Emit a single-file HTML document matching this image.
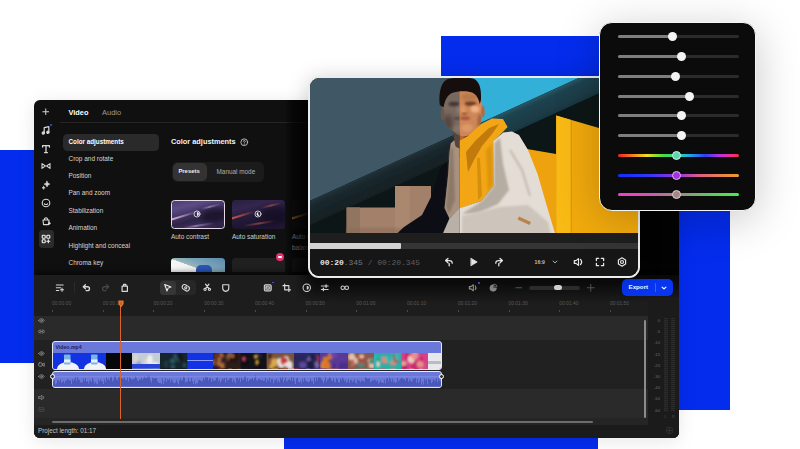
<!DOCTYPE html>
<html lang="en"><head><meta charset="utf-8"><title>Video editor – color adjustments</title>
<style>
*{box-sizing:border-box;margin:0;padding:0}
html,body{width:800px;height:449px;overflow:hidden;background:#fff}
body{font-family:"Liberation Sans",sans-serif;color:#ddd;position:relative}
.abs,.ic,.t{position:absolute}
.t{white-space:nowrap;line-height:1}
.ic{overflow:visible}
.blue{position:absolute;background:#042ced}
#app{position:absolute;left:34px;top:100px;width:645px;height:338px;background:#101010;border-radius:6px;box-shadow:0 3px 18px rgba(0,0,0,.10);overflow:hidden}
#preview{position:absolute;left:308px;top:76px;width:332px;height:202px;border:2px solid #ececec;border-radius:11px;background:#161616;box-shadow:0 3px 22px rgba(0,0,0,.2);overflow:hidden}
#panel{position:absolute;left:599px;top:21.5px;width:157px;height:189px;border:1.5px solid #f4f4f4;border-radius:13px;background:#0b0b0b;box-shadow:0 8px 44px rgba(0,0,0,.22)}
.trk{position:absolute;left:18px;width:121px;height:3px;border-radius:2px;background:#2b2b2b}
.trk i{position:absolute;left:0;top:0;height:3px;border-radius:2px;background:#7e7e7e}
.trk b{position:absolute;top:-3px;width:9px;height:9px;border-radius:4.5px;background:#f4f4f4;margin-left:-4.5px}
.menu{position:absolute;left:34.5px;font-size:6.45px;color:#d6d6d6;white-space:nowrap;line-height:1}
.rl{position:absolute;top:28.5px;font-size:5.4px;color:#5c5c5c;white-space:nowrap;line-height:1;letter-spacing:.1px}
.tick{position:absolute;top:35.5px;width:1px;height:2px;background:#555}
</style></head><body>

<div class="blue" style="left:0;top:150px;width:40px;height:213px"></div>
<div class="blue" style="left:441px;top:36px;width:288.5px;height:374px"></div>
<div class="blue" style="left:284px;top:400px;width:314px;height:49px"></div>
<div id="app">
<div class="abs" style="left:26px;top:22px;width:300px;height:1px;background:#262626"></div>
<div class="t" style="left:34.5px;top:8.599999999999994px;font-size:7.4px;font-weight:bold;color:#fff">Video</div>
<div class="t" style="left:68px;top:8.599999999999994px;font-size:7.5px;color:#9a9a9a">Audio</div>
<svg class="ic" style="left:8.25px;top:8.25px;width:7.5px;height:7.5px" viewBox="0 0 10 10" fill="none" stroke="#d8d8d8" stroke-width="1.3" stroke-linecap="round" stroke-linejoin="round" ><path d="M5 1.2v7.6M1.2 5h7.6"/></svg>
<svg class="ic" style="left:7px;top:25px;width:10px;height:10px" viewBox="0 0 10 10" fill="none" stroke="#d8d8d8" stroke-width="1.2" stroke-linecap="round" stroke-linejoin="round" ><path d="M3.2 8V2.6l4.6-1v5.6"/><circle cx="2.3" cy="8" r="1.1" fill="#d8d8d8"/><circle cx="6.9" cy="7.2" r="1.1" fill="#d8d8d8"/></svg>
<div class="abs" style="left:16px;top:24px;width:2px;height:2px;border-radius:1px;background:#3355ff"></div>
<svg class="ic" style="left:7px;top:43.5px;width:10px;height:10px" viewBox="0 0 10 10" fill="none" stroke="#d8d8d8" stroke-width="1.3" stroke-linecap="round" stroke-linejoin="round" ><path d="M1.6 3V1.6h6.8V3M5 1.6v7M3.6 8.6h2.8"/></svg>
<svg class="ic" style="left:7px;top:61px;width:10px;height:10px" viewBox="0 0 10 10" fill="none" stroke="#d8d8d8" stroke-width="1.1" stroke-linecap="round" stroke-linejoin="round" ><path d="M1 2.6l3.4 2.4L1 7.4zM9 2.6L5.6 5 9 7.4z"/></svg>
<svg class="ic" style="left:7px;top:79.5px;width:10px;height:10px" viewBox="0 0 10 10" fill="none" stroke="#d8d8d8" stroke-width="0.6" stroke-linecap="round" stroke-linejoin="round" ><path d="M6 1.2l.9 2 2 .9-2 .9-.9 2-.9-2-2-.9 2-.9z" fill="#d8d8d8"/><path d="M2.6 6.2l.5 1.1 1.1.5-1.1.5-.5 1.1-.5-1.1L1 7.8l1.1-.5z" fill="#d8d8d8" stroke-width=".5"/></svg>
<svg class="ic" style="left:7px;top:97.5px;width:10px;height:10px" viewBox="0 0 10 10" fill="none" stroke="#d8d8d8" stroke-width="1.1" stroke-linecap="round" stroke-linejoin="round" ><circle cx="5" cy="5" r="3.8"/><path d="M3.4 5.8c.8 1 2.4 1 3.2 0"/></svg>
<svg class="ic" style="left:7px;top:116px;width:10px;height:10px" viewBox="0 0 10 10" fill="none" stroke="#d8d8d8" stroke-width="1.1" stroke-linecap="round" stroke-linejoin="round" ><path d="M2 4h6l-.5 4.6h-5zM3.4 4c0-3 3.2-3 3.2 0M7.4 7.2h2M8.4 6.2v2"/></svg>
<div class="abs" style="left:4.5px;top:130px;width:15.5px;height:18px;border-radius:3.5px;background:#2b2b2b"></div>
<svg class="ic" style="left:7px;top:134px;width:10px;height:10px" viewBox="0 0 10 10" fill="none" stroke="#f0f0f0" stroke-width="1.1" stroke-linecap="round" stroke-linejoin="round" ><rect x="1.2" y="1.2" width="3" height="3" rx=".8"/><rect x="5.8" y="1.2" width="3" height="3" rx=".8"/><rect x="1.2" y="5.8" width="3" height="3" rx=".8"/><path d="M7.3 5.8v3M5.8 7.3h3"/></svg>
<div class="abs" style="left:28.5px;top:33.5px;width:96.5px;height:17.5px;border-radius:4.5px;background:#2a2a2a"></div>
<div class="menu" style="top:39.3px;font-weight:bold;color:#fff;font-size:6.3px;">Color adjustments</div>
<div class="menu" style="top:56.3px;">Crop and rotate</div>
<div class="menu" style="top:73.3px;">Position</div>
<div class="menu" style="top:90.3px;">Pan and zoom</div>
<div class="menu" style="top:107.8px;">Stabilization</div>
<div class="menu" style="top:125.3px;">Animation</div>
<div class="menu" style="top:142.8px;">Highlight and conceal</div>
<div class="menu" style="top:160.3px;">Chroma key</div>
<div class="t" style="left:137px;top:38.400000000000006px;font-size:7.36px;font-weight:bold;color:#f4f4f4">Color adjustments</div>
<svg class="ic" style="left:206.35px;top:37.95px;width:8.5px;height:8.5px" viewBox="0 0 10 10" fill="none" stroke="#cfcfcf" stroke-width="1" stroke-linecap="round" stroke-linejoin="round" ><circle cx="5" cy="5" r="4"/><path d="M3.8 4c0-1.6 2.4-1.6 2.4 0 0 .9-1.2 1-1.2 2M5 7.4v.1"/></svg>
<div class="abs" style="left:138px;top:61.5px;width:92px;height:20px;border-radius:5px;background:#1b1b1b"></div>
<div class="abs" style="left:139px;top:62.5px;width:33.5px;height:18px;border-radius:5px;background:#333"></div>
<div class="t" style="left:144.4px;top:69.19999999999999px;font-size:5.9px;font-weight:bold;color:#f0f0f0">Presets</div>
<div class="t" style="left:182.5px;top:68.80000000000001px;font-size:6.4px;color:#b0b0b0">Manual mode</div>
<div class="abs" style="left:137px;top:99.5px;width:53.5px;height:29.5px;border-radius:3.5px;border:1.4px solid #e6d8e6;background:linear-gradient(166deg,#4c3e6e 0%,#5c4c84 22%,#46386a 40%,#2e2446 62%,#3e3260 82%,#2a2040 100%);overflow:hidden"><div class="abs" style="left:29.4px;top:7.4px;width:26.8px;height:16.2px;border-radius:50%;background:rgba(22,16,36,.75);filter:blur(3px)"></div><div class="abs" style="left:-2px;top:18.3px;width:26.8px;height:2.2px;background:linear-gradient(90deg,rgba(240,190,200,.95),rgba(200,160,200,.7) 50%,rgba(120,100,160,0));transform:rotate(-17deg);transform-origin:0 50%;filter:blur(.5px)"></div><div class="abs" style="left:10.7px;top:26px;width:32.1px;height:1.8px;background:linear-gradient(90deg,rgba(160,130,190,0),rgba(190,160,210,.6) 40%,rgba(150,120,180,0));transform:rotate(-9deg);transform-origin:0 50%;filter:blur(.5px)"></div><div class="abs" style="left:29.4px;top:7.1px;width:21.4px;height:1.6px;background:linear-gradient(90deg,rgba(160,130,190,0),rgba(190,160,210,.6) 40%,rgba(150,120,180,0));transform:rotate(-14deg);transform-origin:0 50%;filter:blur(.5px)"></div></div>
<div class="abs" style="left:198px;top:100px;width:52.5px;height:28.5px;border-radius:3.5px;background:linear-gradient(166deg,#2a1e42 0%,#34264e 25%,#241a3a 50%,#1c142e 75%,#221836 100%);overflow:hidden"><div class="abs" style="left:28.9px;top:7.1px;width:26.2px;height:15.7px;border-radius:50%;background:rgba(16,10,28,.6);filter:blur(3px)"></div><div class="abs" style="left:-2px;top:17.7px;width:26.2px;height:2.2px;background:linear-gradient(90deg,rgba(220,90,60,.95),rgba(190,80,70,.7) 50%,rgba(90,50,90,0));transform:rotate(-17deg);transform-origin:0 50%;filter:blur(.5px)"></div><div class="abs" style="left:10.5px;top:25.1px;width:31.5px;height:1.8px;background:linear-gradient(90deg,rgba(120,60,90,0),rgba(190,90,80,.6) 50%,rgba(120,60,90,0));transform:rotate(-9deg);transform-origin:0 50%;filter:blur(.5px)"></div><div class="abs" style="left:28.9px;top:6.8px;width:21px;height:1.6px;background:linear-gradient(90deg,rgba(120,60,90,0),rgba(190,90,80,.6) 50%,rgba(120,60,90,0));transform:rotate(-14deg);transform-origin:0 50%;filter:blur(.5px)"></div></div>
<div class="abs" style="left:258px;top:100px;width:52px;height:28.5px;border-radius:3.5px;background:#16141a;overflow:hidden"><div class="abs" style="left:-2px;top:18px;width:26px;height:2.2px;background:linear-gradient(90deg,rgba(230,150,40,.95),rgba(200,120,40,.6) 60%,rgba(90,50,40,0));transform:rotate(-17deg);transform-origin:0 50%;filter:blur(.5px)"></div></div>
<svg class="ic" style="left:159.3px;top:110px;width:8px;height:8px" viewBox="0 0 10 10" fill="none" stroke="#eee" stroke-width="1" stroke-linecap="round" stroke-linejoin="round" ><circle cx="5" cy="5" r="3.8"/><path d="M5 2.6a2.4 2.4 0 0 1 0 4.8z" fill="#eee" stroke="none"/></svg>
<svg class="ic" style="left:220px;top:110px;width:8px;height:8px" viewBox="0 0 10 10" fill="none" stroke="#eee" stroke-width="1" stroke-linecap="round" stroke-linejoin="round" ><circle cx="5" cy="5" r="3.8"/><path d="M5.8 3a2.2 2.2 0 1 0 1.4 3.4A2 2 0 0 1 5.8 3z" fill="#eee" stroke="none"/></svg>
<div class="t" style="left:137px;top:134px;font-size:6.45px;color:#d0d0d0">Auto contrast</div>
<div class="t" style="left:198px;top:134px;font-size:6.45px;color:#d0d0d0">Auto saturation</div>
<div class="t" style="left:258px;top:134px;font-size:6.45px;color:#d0d0d0">Auto white</div>
<div class="t" style="left:258px;top:144.6px;font-size:6.45px;color:#d0d0d0">balance</div>
<div class="abs" style="left:137px;top:158px;width:53.5px;height:13.5px;border-radius:3.5px 3.5px 0 0;background:linear-gradient(200deg,#5a8ab0 0%,#7aa4b8 40%,#9ab8b8 60%,#f2f2f2 61%,#fff 100%)"></div>
<div class="abs" style="left:162px;top:165px;width:16px;height:6.5px;border-radius:5px 5px 0 0;background:#2a55b8"></div>
<div class="abs" style="left:198px;top:158px;width:52.5px;height:13.5px;border-radius:3.5px 3.5px 0 0;background:#202020"></div>
<div class="abs" style="left:258px;top:158px;width:52px;height:13.5px;border-radius:3.5px 3.5px 0 0;background:#202020"></div>
<div class="abs" style="left:242px;top:153px;width:8px;height:8px;border-radius:4px;background:#e72f6c"></div>
<div class="abs" style="left:244.3px;top:155.6px;width:3.4px;height:2.8px;border-radius:.8px;background:#fff"></div>
<div class="abs" id="tl" style="left:0;top:174.5px;width:645px;height:163.5px;background:#1d1d1d;box-shadow:0 -3px 6px rgba(0,0,0,.5)">
<div class="abs" style="left:262px;top:0;width:383px;height:27px;background:linear-gradient(180deg,rgba(0,0,0,.7),rgba(0,0,0,.45) 45%,rgba(0,0,0,0));-webkit-mask-image:linear-gradient(90deg,transparent,#000 20px);mask-image:linear-gradient(90deg,transparent,#000 20px)"></div>
<svg class="ic" style="left:21.25px;top:8.25px;width:9.5px;height:9.5px" viewBox="0 0 10 10" fill="none" stroke="#d8d8d8" stroke-width="1.1" stroke-linecap="round" stroke-linejoin="round" ><path d="M1.4 2h7.2M1.4 5h4.4M1.4 8h2.6M7.4 5.4v3.4M5.7 7.1h3.4"/></svg>
<div class="abs" style="left:39.5px;top:7.5px;width:1px;height:11px;background:#2b2b2b"></div>
<svg class="ic" style="left:48px;top:8.5px;width:9px;height:9px" viewBox="0 0 10 10" fill="none" stroke="#d8d8d8" stroke-width="1.5" stroke-linecap="round" stroke-linejoin="round" ><path d="M3.8 2L1.4 4.2l2.4 2.2M1.6 4.2h4.6a2.1 2.1 0 0 1 0 4.2H4.6"/></svg>
<svg class="ic" style="left:67px;top:8.5px;width:9px;height:9px" viewBox="0 0 10 10" fill="none" stroke="#454545" stroke-width="1.5" stroke-linecap="round" stroke-linejoin="round" ><path d="M6.2 2l2.4 2.2-2.4 2.2M8.4 4.2H3.8a2.1 2.1 0 0 0 0 4.2h1.6"/></svg>
<svg class="ic" style="left:86.25px;top:8.05px;width:9.5px;height:9.5px" viewBox="0 0 10 10" fill="none" stroke="#d8d8d8" stroke-width="1.2" stroke-linecap="round" stroke-linejoin="round" ><path d="M2.2 3.4h5.6v5.4H2.2zM3.8 3.2V1.4h2.4v1.8" stroke-width="1.3"/></svg>
<div class="abs" style="left:125.5px;top:5.5px;width:36px;height:15px;border-radius:4px;background:#272727"></div>
<div class="abs" style="left:126px;top:6px;width:15.5px;height:14px;border-radius:3.5px;background:#363636"></div>
<svg class="ic" style="left:129.25px;top:8.25px;width:9.5px;height:9.5px" viewBox="0 0 10 10" fill="none" stroke="#f0f0f0" stroke-width="1.1" stroke-linecap="round" stroke-linejoin="round" ><path d="M1.8 1.6l6.6 2.6-3 1.2-1.2 3z"/></svg>
<svg class="ic" style="left:147.25px;top:8.25px;width:9.5px;height:9.5px" viewBox="0 0 10 10" fill="none" stroke="#d8d8d8" stroke-width="1.2" stroke-linecap="round" stroke-linejoin="round" ><g transform="rotate(32 5 5)"><rect x="1" y="2.4" width="8" height="5.2" rx="2.6"/><circle cx="5" cy="5" r="1.1"/></g></svg>
<svg class="ic" style="left:168.75px;top:8.75px;width:8.5px;height:8.5px" viewBox="0 0 10 10" fill="none" stroke="#d8d8d8" stroke-width="1.3" stroke-linecap="round" stroke-linejoin="round" ><circle cx="2.4" cy="7.4" r="1.3"/><circle cx="7.6" cy="7.4" r="1.3"/><path d="M3.2 6.4L7 1.4M6.8 6.4L3 1.4" stroke-width="1.5"/></svg>
<svg class="ic" style="left:187.25px;top:8.25px;width:9.5px;height:9.5px" viewBox="0 0 10 10" fill="none" stroke="#d8d8d8" stroke-width="1.2" stroke-linecap="round" stroke-linejoin="round" ><path d="M1.8 1.8h6.4v3.6c0 1.8-1.6 3-3.2 3.4-1.6-.4-3.2-1.6-3.2-3.4z"/></svg>
<svg class="ic" style="left:229.25px;top:8.25px;width:9.5px;height:9.5px" viewBox="0 0 10 10" fill="none" stroke="#d8d8d8" stroke-width="1.1" stroke-linecap="round" stroke-linejoin="round" ><rect x="1.4" y="1.8" width="7.2" height="6.6" rx="1.2" fill="#6c6c6c"/><rect x="3.2" y="4" width="3.6" height="2.4" rx=".4" stroke-width=".8"/></svg>
<div class="abs" style="left:238px;top:7px;width:1.8px;height:1.8px;border-radius:1px;background:#5a52e0"></div>
<svg class="ic" style="left:247.95px;top:8.25px;width:9.5px;height:9.5px" viewBox="0 0 10 10" fill="none" stroke="#d8d8d8" stroke-width="1.2" stroke-linecap="round" stroke-linejoin="round" ><path d="M2.8 1v6.2H9M1 2.8h6.2V9"/></svg>
<svg class="ic" style="left:268.05px;top:8.25px;width:9.5px;height:9.5px" viewBox="0 0 10 10" fill="none" stroke="#d8d8d8" stroke-width="1.1" stroke-linecap="round" stroke-linejoin="round" ><circle cx="5" cy="5" r="3.9"/><path d="M5 2.8a2.2 2.2 0 0 1 0 4.4z" fill="#d4d4d4" stroke="none"/></svg>
<svg class="ic" style="left:286.25px;top:8.25px;width:9.5px;height:9.5px" viewBox="0 0 10 10" fill="none" stroke="#d8d8d8" stroke-width="1.1" stroke-linecap="round" stroke-linejoin="round" ><path d="M1.4 3.2h7.2M1.4 6.8h7.2" /><path d="M6.4 2v2.4M3.6 5.6V8" stroke-width="1.5"/></svg>
<svg class="ic" style="left:305.65px;top:8.25px;width:9.5px;height:9.5px" viewBox="0 0 10 10" fill="none" stroke="#d8d8d8" stroke-width="1.1" stroke-linecap="round" stroke-linejoin="round" ><circle cx="2.9" cy="5" r="1.9"/><circle cx="7.1" cy="5" r="1.9"/></svg>
<svg class="ic" style="left:434.25px;top:8.25px;width:9.5px;height:9.5px" viewBox="0 0 10 10" fill="none" stroke="#9a9a9a" stroke-width="1.1" stroke-linecap="round" stroke-linejoin="round" ><path d="M1.4 3.8h1.8l2.4-2v6.4l-2.4-2H1.4z"/><path d="M7.6 3c1 1.2 1 2.8 0 4"/></svg>
<div class="abs" style="left:443.5px;top:7px;width:2px;height:2px;border-radius:1px;background:#4466ff"></div>
<svg class="ic" style="left:454.5px;top:8.5px;width:9px;height:9px" viewBox="0 0 10 10" fill="none" stroke="#8a8a8a" stroke-width="0.8" stroke-linecap="round" stroke-linejoin="round" ><path d="M4.6 2v3.6h3.6a3.6 3.6 0 1 1-3.6-3.6z" fill="#8a8a8a"/><path d="M6 1.2a3.2 3.2 0 0 1 3 3H6z" stroke-width=".8"/></svg>
<svg class="ic" style="left:480.25px;top:8.25px;width:9.5px;height:9.5px" viewBox="0 0 10 10" fill="none" stroke="#5a5a5a" stroke-width="1.1" stroke-linecap="round" stroke-linejoin="round" ><path d="M2 5h6"/></svg>
<div class="abs" style="left:495px;top:11px;width:51px;height:4px;border-radius:2px;background:#2e2e2e"></div>
<div class="abs" style="left:519.5px;top:10.5px;width:8px;height:5px;border-radius:2.5px;background:#dcdcdc"></div>
<svg class="ic" style="left:552.25px;top:8.25px;width:9.5px;height:9.5px" viewBox="0 0 10 10" fill="none" stroke="#5a5a5a" stroke-width="1" stroke-linecap="round" stroke-linejoin="round" ><path d="M5 1.4v7.2M1.4 5h7.2"/></svg>
<div class="abs" style="left:587.5px;top:4.5px;width:51.5px;height:17px;border-radius:5px;background:#0735f0"></div>
<div class="t" style="left:594.5px;top:9.800000000000011px;font-size:6.2px;font-weight:bold;color:#fff">Export</div>
<div class="abs" style="left:621px;top:8.5px;width:1px;height:9px;background:#3f61f2"></div>
<svg class="ic" style="left:626px;top:9.3px;width:8px;height:8px" viewBox="0 0 10 10" fill="none" stroke="#fff" stroke-width="1.4" stroke-linecap="round" stroke-linejoin="round" ><path d="M2.6 3.8L5 6.2l2.4-2.4"/></svg>
<div class="t" style="left:18px;top:27.30000000000001px;font-size:4.95px;color:#585858">00:00:00</div>
<div class="abs" style="left:18px;top:35px;width:1px;height:2px;background:#4a4a4a"></div>
<div class="t" style="left:68.7px;top:27.30000000000001px;font-size:4.95px;color:#585858">00:00:10</div>
<div class="abs" style="left:68.7px;top:35px;width:1px;height:2px;background:#4a4a4a"></div>
<div class="t" style="left:119.4px;top:27.30000000000001px;font-size:4.95px;color:#585858">00:00:20</div>
<div class="abs" style="left:119.4px;top:35px;width:1px;height:2px;background:#4a4a4a"></div>
<div class="t" style="left:170.2px;top:27.30000000000001px;font-size:4.95px;color:#585858">00:00:30</div>
<div class="abs" style="left:170.2px;top:35px;width:1px;height:2px;background:#4a4a4a"></div>
<div class="t" style="left:220.9px;top:27.30000000000001px;font-size:4.95px;color:#585858">00:00:40</div>
<div class="abs" style="left:220.9px;top:35px;width:1px;height:2px;background:#4a4a4a"></div>
<div class="t" style="left:271.6px;top:27.30000000000001px;font-size:4.95px;color:#585858">00:00:50</div>
<div class="abs" style="left:271.6px;top:35px;width:1px;height:2px;background:#4a4a4a"></div>
<div class="t" style="left:322.3px;top:27.30000000000001px;font-size:4.95px;color:#585858">00:01:00</div>
<div class="abs" style="left:322.3px;top:35px;width:1px;height:2px;background:#4a4a4a"></div>
<div class="t" style="left:373px;top:27.30000000000001px;font-size:4.95px;color:#585858">00:01:10</div>
<div class="abs" style="left:373px;top:35px;width:1px;height:2px;background:#4a4a4a"></div>
<div class="t" style="left:423.8px;top:27.30000000000001px;font-size:4.95px;color:#585858">00:01:20</div>
<div class="abs" style="left:423.8px;top:35px;width:1px;height:2px;background:#4a4a4a"></div>
<div class="t" style="left:474.5px;top:27.30000000000001px;font-size:4.95px;color:#585858">00:01:30</div>
<div class="abs" style="left:474.5px;top:35px;width:1px;height:2px;background:#4a4a4a"></div>
<div class="t" style="left:525.2px;top:27.30000000000001px;font-size:4.95px;color:#585858">00:01:40</div>
<div class="abs" style="left:525.2px;top:35px;width:1px;height:2px;background:#4a4a4a"></div>
<div class="t" style="left:575.9px;top:27.30000000000001px;font-size:4.95px;color:#585858">00:01:50</div>
<div class="abs" style="left:575.9px;top:35px;width:1px;height:2px;background:#4a4a4a"></div>
<div class="abs" style="left:0;top:41.5px;width:614px;height:23.5px;background:#2a2a2a"></div>
<div class="abs" style="left:0;top:65px;width:614px;height:49px;background:#212121"></div>
<div class="abs" style="left:0;top:114px;width:614px;height:29.5px;background:#2a2a2a"></div>
<div class="abs" style="left:0;top:143.5px;width:614px;height:7px;background:#252525"></div>
<svg class="ic" style="left:4px;top:42.5px;width:7px;height:7px" viewBox="0 0 10 10" fill="none" stroke="#8c8c8c" stroke-width="1.2" stroke-linecap="round" stroke-linejoin="round" ><path d="M1 5c2-3.4 6-3.4 8 0-2 3.4-6 3.4-8 0z"/><circle cx="5" cy="5" r="1.2"/></svg>
<svg class="ic" style="left:4px;top:53.5px;width:7px;height:7px" viewBox="0 0 10 10" fill="none" stroke="#8c8c8c" stroke-width="1.2" stroke-linecap="round" stroke-linejoin="round" ><path d="M4 3H3a2 2 0 0 0 0 4h1M6 3h1a2 2 0 0 1 0 4H6M3.6 5h2.8"/></svg>
<svg class="ic" style="left:4px;top:75px;width:7px;height:7px" viewBox="0 0 10 10" fill="none" stroke="#8c8c8c" stroke-width="1.2" stroke-linecap="round" stroke-linejoin="round" ><path d="M1 5c2-3.4 6-3.4 8 0-2 3.4-6 3.4-8 0z"/><circle cx="5" cy="5" r="1.2"/></svg>
<svg class="ic" style="left:4px;top:86.5px;width:7px;height:7px" viewBox="0 0 10 10" fill="none" stroke="#8c8c8c" stroke-width="1.2" stroke-linecap="round" stroke-linejoin="round" ><rect x="1" y="2.6" width="5" height="4.8" rx="1"/><path d="M6 5l3-2v4z"/></svg>
<svg class="ic" style="left:4px;top:98px;width:7px;height:7px" viewBox="0 0 10 10" fill="none" stroke="#8c8c8c" stroke-width="1.2" stroke-linecap="round" stroke-linejoin="round" ><path d="M1 5c2-3.4 6-3.4 8 0-2 3.4-6 3.4-8 0z"/><circle cx="5" cy="5" r="1.2"/></svg>
<svg class="ic" style="left:4px;top:119.5px;width:7px;height:7px" viewBox="0 0 10 10" fill="none" stroke="#8c8c8c" stroke-width="1.2" stroke-linecap="round" stroke-linejoin="round" ><path d="M1.4 3.8h1.8l2.4-2v6.4l-2.4-2H1.4z"/><path d="M7.6 3.4c.8 1 .8 2.2 0 3.2"/></svg>
<svg class="ic" style="left:4px;top:131px;width:7px;height:7px" viewBox="0 0 10 10" fill="none" stroke="#4a4a4a" stroke-width="1.2" stroke-linecap="round" stroke-linejoin="round" ><rect x="1.4" y="2.4" width="7.2" height="5.2" rx="1"/><path d="M3 5h4"/></svg>
<div class="abs" style="left:18px;top:66.5px;width:389.5px;height:29px;border-radius:3px;background:#6a78dc;border:1px solid #e8e8f4;overflow:hidden">
<div class="t" style="left:2.5px;top:3px;font-size:5.2px;color:#1c2258;font-weight:bold">Video.mp4</div>
<div class="abs" style="left:0px;top:11px;width:26.5px;height:15.5px;background:#1233e4"></div>
<div class="abs" style="left:26.5px;top:11px;width:26px;height:15.5px;background:#1233e4"></div>
<div class="abs" style="left:52.5px;top:11px;width:26.5px;height:15.5px;background:#07070a"></div>
<div class="abs" style="left:79px;top:11px;width:28px;height:15.5px;background:linear-gradient(180deg,#a8c4e0 0 25%,#d8d4d0 25% 68%,#2a44d8 68%)"></div>
<div class="abs" style="left:107px;top:11px;width:27px;height:15.5px;background:linear-gradient(180deg,#10141a 0 22%,#2c5560 22% 50%,#16323a 50% 78%,#0c1216 78%)"></div>
<div class="abs" style="left:134px;top:11px;width:26px;height:15.5px;background:linear-gradient(180deg,#1233e4 0 42%,#8a9cf4 42% 52%,#1233e4 52%)"></div>
<div class="abs" style="left:160px;top:11px;width:27.6px;height:15.5px;background:linear-gradient(90deg,#2a1612 0 18%,#6a3024 18% 36%,#20100e 36% 52%,#8a5838 52% 68%,#2c1814 68% 84%,#5a2a20 84%)"></div>
<div class="abs" style="left:187.6px;top:11px;width:26px;height:15.5px;background:linear-gradient(180deg,#14141c 0 55%,#2a2438 55% 75%,#14141c 75%)"></div>
<div class="abs" style="left:213.6px;top:11px;width:27.4px;height:15.5px;background:linear-gradient(90deg,#8a5a3c 0 20%,#c89838 20% 40%,#5a3428 40% 58%,#c83838 58% 78%,#e8e0e0 78%)"></div>
<div class="abs" style="left:241px;top:11px;width:26px;height:15.5px;background:linear-gradient(90deg,#c03040 0 18%,#28285c 18% 45%,#7868a8 45% 62%,#30306c 62% 82%,#5a4a98 82%)"></div>
<div class="abs" style="left:267px;top:11px;width:28px;height:15.5px;background:linear-gradient(90deg,#5a3a98 0 25%,#d87828 25% 60%,#6a48a8 60%)"></div>
<div class="abs" style="left:295px;top:11px;width:26px;height:15.5px;background:linear-gradient(90deg,#b04838 0 22%,#48887c 22% 42%,#c86858 42% 62%,#589888 62% 80%,#b85848 80%)"></div>
<div class="abs" style="left:321px;top:11px;width:27.5px;height:15.5px;background:linear-gradient(90deg,#28b0a8 0 20%,#d85868 20% 42%,#30b8b0 42% 58%,#e08878 58% 78%,#28a8a0 78%)"></div>
<div class="abs" style="left:348.5px;top:11px;width:26px;height:15.5px;background:linear-gradient(90deg,#d83878 0 25%,#e89088 25% 45%,#c82868 45% 65%,#e8a098 65% 82%,#d84888 82%)"></div>
<div class="abs" style="left:374.5px;top:11px;width:13.5px;height:15.5px;background:linear-gradient(180deg,#e8e8ec 0 50%,#b8bcc8 50% 70%,#e8e8ec 70%)"></div>
<svg class="abs" style="left:0px;top:11px" width="26.5" height="15.5" viewBox="0 0 26.5 15.5"><ellipse cx="15" cy="15.5" rx="11" ry="6.5" fill="#f2f4fa"/><rect x="11" y="1.5" width="6.5" height="10" rx=".8" fill="#7ab4e4"/><rect x="11" y="6.5" width="6.5" height="3" fill="#e8eef4"/></svg>
<svg class="abs" style="left:26.5px;top:11px" width="26.5" height="15.5" viewBox="0 0 26.5 15.5"><ellipse cx="15" cy="15.5" rx="11" ry="6.5" fill="#f2f4fa"/><rect x="11" y="1.5" width="6.5" height="10" rx=".8" fill="#7ab4e4"/><rect x="11" y="6.5" width="6.5" height="3" fill="#e8eef4"/></svg>
<svg class="abs" style="left:0;top:11px" width="389" height="15.5" viewBox="0 0 389 15.5"><defs><filter id="tb" x="-10%" y="-30%" width="120%" height="160%"><feGaussianBlur stdDeviation="0.9"/></filter><clipPath id="tc132"><rect x="79" y="0" width="28" height="15.5"/></clipPath><clipPath id="tc160"><rect x="107" y="0" width="27" height="15.5"/></clipPath><clipPath id="tc213"><rect x="160" y="0" width="27.6" height="15.5"/></clipPath><clipPath id="tc240"><rect x="187.6" y="0" width="26" height="15.5"/></clipPath><clipPath id="tc266"><rect x="213.6" y="0" width="27.4" height="15.5"/></clipPath><clipPath id="tc294"><rect x="241" y="0" width="26" height="15.5"/></clipPath><clipPath id="tc320"><rect x="267" y="0" width="28" height="15.5"/></clipPath><clipPath id="tc348"><rect x="295" y="0" width="26" height="15.5"/></clipPath><clipPath id="tc374"><rect x="321" y="0" width="27.5" height="15.5"/></clipPath><clipPath id="tc401"><rect x="348.5" y="0" width="26" height="15.5"/></clipPath></defs><rect x="79" y="0" width="28.3" height="15.5" fill="#c4ccd4"/><rect x="107" y="0" width="27.3" height="15.5" fill="#16262c"/><rect x="160" y="0" width="27.9" height="15.5" fill="#2c1c1a"/><rect x="187.6" y="0" width="26.3" height="15.5" fill="#121218"/><rect x="213.6" y="0" width="27.7" height="15.5" fill="#7a5438"/><rect x="241" y="0" width="26.3" height="15.5" fill="#30285a"/><rect x="267" y="0" width="28.3" height="15.5" fill="#5a3a98"/><rect x="295" y="0" width="26.3" height="15.5" fill="#8a5a4c"/><rect x="321" y="0" width="27.8" height="15.5" fill="#2ab0a8"/><rect x="348.5" y="0" width="26.3" height="15.5" fill="#d84088"/><g clip-path="url(#tc132)" filter="url(#tb)"><ellipse cx="102.1" cy="12.3" rx="3.3" ry="3.4" fill="#f0f0f0"/><ellipse cx="85.2" cy="11.6" rx="2.6" ry="3.8" fill="#8aa8c8"/><ellipse cx="82.9" cy="5.6" rx="1.7" ry="4.4" fill="#e0d8d0"/><ellipse cx="95.4" cy="6.8" rx="2.5" ry="4.2" fill="#a8c4e0"/><ellipse cx="96.1" cy="12" rx="1.6" ry="2.1" fill="#e0d8d0"/><ellipse cx="95.5" cy="11.3" rx="2.3" ry="3.8" fill="#e0d8d0"/><ellipse cx="93.5" cy="9.7" rx="2.6" ry="4" fill="#e0d8d0"/><ellipse cx="96.9" cy="6.9" rx="2.8" ry="4.8" fill="#f0f0f0"/></g><g clip-path="url(#tc160)" filter="url(#tb)"><ellipse cx="125.5" cy="5.8" rx="2" ry="2.9" fill="#2c5560"/><ellipse cx="122" cy="3.3" rx="1.7" ry="2.9" fill="#2c5560"/><ellipse cx="131.5" cy="12.2" rx="1.5" ry="2.6" fill="#2c5560"/><ellipse cx="119.8" cy="13.8" rx="2.4" ry="2.2" fill="#2c5560"/><ellipse cx="127.2" cy="5.2" rx="1.7" ry="3" fill="#10141a"/><ellipse cx="126.7" cy="3.4" rx="2.1" ry="2.3" fill="#0c1216"/><ellipse cx="119.7" cy="7.8" rx="3.1" ry="2.6" fill="#2c5560"/><ellipse cx="113.1" cy="10.8" rx="1.8" ry="3.9" fill="#1e3e48"/></g><g clip-path="url(#tc213)" filter="url(#tb)"><ellipse cx="171.2" cy="13.9" rx="1.5" ry="4.6" fill="#6a3024"/><ellipse cx="169" cy="12.6" rx="2" ry="3.2" fill="#b07040"/><ellipse cx="177.3" cy="3.2" rx="3.8" ry="2.6" fill="#b07040"/><ellipse cx="161.7" cy="9.3" rx="3.4" ry="3.2" fill="#8a5838"/><ellipse cx="163.7" cy="9" rx="2.1" ry="3.8" fill="#6a3024"/><ellipse cx="176.8" cy="3.5" rx="2.9" ry="4.5" fill="#8a5838"/><ellipse cx="182.8" cy="4.2" rx="1.9" ry="4.7" fill="#20100e"/><ellipse cx="167.6" cy="4.3" rx="3.2" ry="4.8" fill="#b07040"/><ellipse cx="178.4" cy="6.7" rx="2.6" ry="2.2" fill="#20100e"/><ellipse cx="164.1" cy="2.5" rx="3.7" ry="2.7" fill="#6a3024"/><ellipse cx="171.1" cy="7" rx="3.6" ry="3.5" fill="#3a2420"/><ellipse cx="165.8" cy="10.6" rx="1.7" ry="2.7" fill="#b07040"/></g><g clip-path="url(#tc240)" filter="url(#tb)"><ellipse cx="204.1" cy="9.4" rx="1.7" ry="2.6" fill="#e0b030"/><ellipse cx="206.3" cy="2.8" rx="2.4" ry="2.7" fill="#2a2438"/><ellipse cx="193.2" cy="6.4" rx="2.8" ry="2.4" fill="#1c1c28"/><ellipse cx="192.3" cy="7.4" rx="2.3" ry="4.2" fill="#0e0e14"/><ellipse cx="202.5" cy="3.7" rx="1.6" ry="2.1" fill="#e0b030"/><ellipse cx="205.2" cy="13.6" rx="1.5" ry="3.9" fill="#0e0e14"/><ellipse cx="190.6" cy="5.7" rx="1.8" ry="2.2" fill="#d04060"/></g><g clip-path="url(#tc266)" filter="url(#tb)"><ellipse cx="228.4" cy="10.8" rx="3.6" ry="4.2" fill="#e8e0e0"/><ellipse cx="218.3" cy="13.6" rx="2.3" ry="2.3" fill="#d8a848"/><ellipse cx="237.1" cy="12.5" rx="2.5" ry="4.4" fill="#e8e0e0"/><ellipse cx="229.1" cy="9.5" rx="2.4" ry="3.7" fill="#e8e0e0"/><ellipse cx="216.9" cy="3.1" rx="1.8" ry="2.8" fill="#3a2418"/><ellipse cx="232.9" cy="6.7" rx="3.2" ry="3.7" fill="#e8e0e0"/><ellipse cx="226.4" cy="8.5" rx="2.7" ry="3.5" fill="#e8e0e0"/><ellipse cx="229.8" cy="7.8" rx="2" ry="4.1" fill="#c83838"/><ellipse cx="234.1" cy="9.9" rx="2.6" ry="4.7" fill="#e8e0e0"/><ellipse cx="222.4" cy="10.1" rx="2" ry="2.5" fill="#c83838"/><ellipse cx="231.2" cy="7.3" rx="3.6" ry="3" fill="#c83838"/><ellipse cx="221.2" cy="9.6" rx="3.3" ry="4.3" fill="#d8a848"/></g><g clip-path="url(#tc294)" filter="url(#tb)"><ellipse cx="262.7" cy="6.6" rx="2.8" ry="2.9" fill="#28285c"/><ellipse cx="245.6" cy="6.2" rx="3.6" ry="2.1" fill="#28285c"/><ellipse cx="264.4" cy="5.3" rx="1.9" ry="3.4" fill="#c03040"/><ellipse cx="263.8" cy="12" rx="2.4" ry="3.6" fill="#7868a8"/><ellipse cx="249.8" cy="12.1" rx="3.8" ry="3.4" fill="#5a4a98"/><ellipse cx="261.6" cy="5.3" rx="2.9" ry="4" fill="#c03040"/><ellipse cx="255.6" cy="5.7" rx="3.3" ry="2.1" fill="#7868a8"/><ellipse cx="251.8" cy="4.3" rx="3.3" ry="2.8" fill="#28285c"/><ellipse cx="260.8" cy="13.8" rx="1.8" ry="2.3" fill="#28285c"/><ellipse cx="257.6" cy="11.7" rx="3.7" ry="4.1" fill="#1c1c40"/><ellipse cx="261.4" cy="5.1" rx="3.1" ry="4.3" fill="#28285c"/><ellipse cx="258.9" cy="4.1" rx="2.1" ry="3" fill="#1c1c40"/></g><g clip-path="url(#tc320)" filter="url(#tb)"><ellipse cx="281" cy="14" rx="1.9" ry="4.5" fill="#4a2e88"/><ellipse cx="270.7" cy="13.2" rx="3.2" ry="2.4" fill="#e08830"/><ellipse cx="273.4" cy="12.6" rx="1.5" ry="3.7" fill="#2a1a40"/><ellipse cx="288.4" cy="13.3" rx="2.6" ry="4" fill="#4a2e88"/><ellipse cx="271" cy="12.4" rx="3.3" ry="4.8" fill="#e08830"/><ellipse cx="273.8" cy="12.8" rx="3.8" ry="4.9" fill="#d87828"/><ellipse cx="292.9" cy="13.2" rx="2.1" ry="4.2" fill="#4a2e88"/><ellipse cx="277.2" cy="3" rx="2.5" ry="3.7" fill="#d87828"/><ellipse cx="280.7" cy="2.3" rx="3.4" ry="2.2" fill="#6a48a8"/><ellipse cx="272.8" cy="6" rx="3.3" ry="2.4" fill="#d87828"/></g><g clip-path="url(#tc348)" filter="url(#tb)"><ellipse cx="319.5" cy="12.8" rx="2.7" ry="4" fill="#48887c"/><ellipse cx="318.3" cy="7.9" rx="3.7" ry="2.3" fill="#e8c0a8"/><ellipse cx="306.6" cy="8.7" rx="3.4" ry="3.7" fill="#48887c"/><ellipse cx="308.5" cy="12.1" rx="2.8" ry="2.9" fill="#48887c"/><ellipse cx="318.5" cy="12.4" rx="2.9" ry="2.9" fill="#e8c0a8"/><ellipse cx="318.8" cy="8.3" rx="2.8" ry="2.6" fill="#48887c"/><ellipse cx="299.1" cy="2.1" rx="2.4" ry="3.6" fill="#589888"/><ellipse cx="308.4" cy="6.8" rx="3.3" ry="3.7" fill="#b04838"/><ellipse cx="298.6" cy="4" rx="3.6" ry="3.4" fill="#e8c0a8"/><ellipse cx="302.7" cy="7.7" rx="1.8" ry="3.3" fill="#e8c0a8"/><ellipse cx="308.6" cy="3.3" rx="2.5" ry="2.1" fill="#e8c0a8"/><ellipse cx="299.5" cy="11.4" rx="1.6" ry="2.6" fill="#c86858"/></g><g clip-path="url(#tc374)" filter="url(#tb)"><ellipse cx="322.8" cy="5.4" rx="3.2" ry="2.7" fill="#30b8b0"/><ellipse cx="325.1" cy="10.8" rx="1.8" ry="3.5" fill="#f0d0c0"/><ellipse cx="340.1" cy="10.4" rx="3.5" ry="2.1" fill="#e08878"/><ellipse cx="332.6" cy="8.4" rx="1.9" ry="2.6" fill="#28a8a0"/><ellipse cx="335.6" cy="4.6" rx="2" ry="3.6" fill="#28a8a0"/><ellipse cx="343.5" cy="4.8" rx="3.2" ry="4.4" fill="#c03850"/><ellipse cx="330.2" cy="5.8" rx="3.6" ry="2.7" fill="#30b8b0"/><ellipse cx="344.2" cy="3.6" rx="2.1" ry="4.2" fill="#30b8b0"/><ellipse cx="332" cy="7.2" rx="3.7" ry="3.6" fill="#e08878"/><ellipse cx="325.6" cy="6.8" rx="3.1" ry="2.1" fill="#28a8a0"/><ellipse cx="336.5" cy="6.3" rx="3.4" ry="3.1" fill="#30b8b0"/></g><g clip-path="url(#tc401)" filter="url(#tb)"><ellipse cx="361.6" cy="11.1" rx="2.7" ry="4.1" fill="#d84888"/><ellipse cx="368.5" cy="7.8" rx="1.6" ry="4.3" fill="#c82868"/><ellipse cx="361.8" cy="8.8" rx="1.8" ry="2.6" fill="#a02058"/><ellipse cx="354" cy="3.9" rx="2.2" ry="4" fill="#c82868"/><ellipse cx="351.4" cy="13.4" rx="2.6" ry="4.3" fill="#a02058"/><ellipse cx="359" cy="7.1" rx="2.3" ry="2.6" fill="#e8a098"/><ellipse cx="350.3" cy="10.4" rx="3.4" ry="2.5" fill="#e8a098"/><ellipse cx="358.3" cy="6.4" rx="3.6" ry="3.8" fill="#f0c8c0"/><ellipse cx="361.8" cy="2.2" rx="3.6" ry="4.4" fill="#e89088"/><ellipse cx="370.1" cy="12.9" rx="3.7" ry="3.7" fill="#d84888"/><ellipse cx="361.6" cy="13.8" rx="3.4" ry="2.8" fill="#c82868"/><ellipse cx="367.1" cy="11.3" rx="3.4" ry="3.2" fill="#e89088"/></g><rect x="79" y="11" width="28" height="4.5" fill="#2a44d8"/></svg>
</div>
<div class="abs" style="left:18px;top:96.5px;width:389.5px;height:16.5px;border-radius:3px;background:#6a78da;border:1px solid #e8e8f4;overflow:hidden">
<svg class="abs" style="left:0;top:0" width="387.5" height="14.5" viewBox="0 0 387.5 14.5"><path d="M0 14.5V9.5H1V8.3H2V12.5H3V11.2H4V7.4H5V8.4H6V9.4H7V7.2H8V10.9H9V10.1H10V8.9H11V11.2H12V9H13V8.8H14V7.1H15V7.8H16V8.6H17V8.6H18V12.3H19V7.2H20V8.8H21V7.3H22V5H23V9.1H24V4.2H25V7.6H26V8H27V10.6H28V10.3H29V10.5H30V6.4H31V8.9H32V6H33V10.1H34V9H35V11.5H36V8.7H37V8.6H38V10.6H39V6.1H40V8.6H41V11.4H42V10.1H43V11.5H44V12.5H45V7.8H46V9.6H47V7.3H48V9.1H49V9.8H50V12H51V7.6H52V10H53V5.1H54V8H55V6.7H56V8.5H57V4.6H58V4.8H59V9.5H60V7.9H61V4.2H62V3.6H63V7.6H64V8.2H65V4.4H66V4.5H67V4H68V6.1H69V6.8H70V6.5H71V4.9H72V8.3H73V7.9H74V5.2H75V9.5H76V5.3H77V6.3H78V7.4H79V7.6H80V7.1H81V6.8H82V4H83V6H84V8.4H85V9H86V7.2H87V7.8H88V5.4H89V8H90V6.3H91V3.9H92V6H93V6.2H94V3.8H95V3.8H96V3.8H97V8.5H98V10.8H99V5.6H100V6.5H101V6.2H102V6.3H103V6.1H104V9.3H105V10.5H106V11H107V11.1H108V12H109V6.3H110V11.9H111V9.1H112V6H113V10.2H114V7.3H115V8.1H116V6.8H117V10.6H118V7.2H119V8.7H120V10.9H121V11H122V10.5H123V7.7H124V10.6H125V12.5H126V8.4H127V6.5H128V8.5H129V8.2H130V4.9H131V5.8H132V10.4H133V9.7H134V9.6H135V5.5H136V9H137V9.5H138V5.9H139V9.4H140V11.9H141V8.7H142V12.5H143V11.1H144V11.4H145V8.6H146V7.8H147V8.5H148V9H149V9.3H150V5.7H151V7.8H152V4.3H153V5.6H154V5H155V8.6H156V5.7H157V6.5H158V9.7H159V6.8H160V8.7H161V9.1H162V8H163V6H164V5.1H165V9.5H166V7.8H167V10.4H168V8.7H169V6.4H170V7.4H171V5.9H172V10.6H173V5.6H174V8.4H175V8H176V7H177V6.1H178V6.1H179V9.9H180V7.3H181V9.3H182V11.3H183V5.7H184V5.7H185V7.7H186V5.8H187V9.9H188V5.4H189V7.6H190V7.9H191V4.1H192V3.9H193V9.5H194V6.2H195V9.5H196V7.9H197V7.3H198V7.2H199V6H200V8.5H201V6.2H202V3.5H203V8.1H204V8.9H205V6.9H206V7.3H207V7.4H208V8.6H209V8.1H210V8.9H211V8.4H212V5.4H213V10.3H214V7.4H215V8.6H216V5.8H217V9.9H218V7H219V6.9H220V11.2H221V8.5H222V8H223V6.7H224V10.1H225V8.4H226V10.2H227V5.5H228V7.3H229V5.3H230V10.3H231V8H232V5.2H233V8.9H234V9.3H235V7.4H236V7.6H237V8.5H238V5.1H239V9.3H240V5.4H241V9.2H242V11.9H243V6.6H244V5.7H245V10H246V10.4H247V8.9H248V11.3H249V6.7H250V9.7H251V6.1H252V8.6H253V9.3H254V9.5H255V10.2H256V9.6H257V6.6H258V9.2H259V9.1H260V11.7H261V5.7H262V9.4H263V4.8H264V8.5H265V5.1H266V5.6H267V5.8H268V7.3H269V8.8H270V11.2H271V8.5H272V4.6H273V9.7H274V7.6H275V6.9H276V5.3H277V6H278V8.2H279V9.3H280V6.7H281V9.4H282V10.2H283V6.2H284V7.1H285V10.3H286V10.2H287V6.3H288V8.2H289V5.2H290V6.7H291V9.3H292V7.4H293V10.8H294V9.7H295V7.1H296V11H297V8.2H298V8H299V10H300V8.7H301V7.2H302V10.5H303V11.5H304V7.4H305V8.6H306V8.7H307V10.4H308V8.5H309V8.8H310V9H311V9.8H312V5.2H313V6.1H314V7H315V6.7H316V6.6H317V10.2H318V9.4H319V7.9H320V8.7H321V7.3H322V8.6H323V9.4H324V8.2H325V11.4H326V10.3H327V8.8H328V10.6H329V10.7H330V11H331V7.8H332V11.2H333V6.7H334V5.9H335V9.5H336V5.7H337V7H338V9.7H339V7H340V10.3H341V9.3H342V11.3H343V10H344V6.1H345V9.5H346V8.1H347V6.9H348V5.4H349V6.6H350V6.9H351V7.2H352V8.7H353V6.2H354V5.9H355V9.9H356V7.7H357V8.6H358V10H359V8.7H360V6.7H361V7H362V6H363V10.8H364V6.8H365V11H366V9.2H367V6.3H368V12.4H369V9.4H370V12.5H371V6.7H372V8.5H373V7.2H374V12.5H375V7H376V7.3H377V7.8H378V11H379V9.8H380V7H381V8.7H382V8.4H383V6H384V10.1H385V6.9H386V8.6H387V9.3H388V14.5z" fill="#4a58b9"/><path d="M0 4.8H387.5" stroke="#8a98ec" stroke-width=".7"/></svg>
</div>
<div class="abs" style="left:15.5px;top:99px;width:5px;height:5px;border-radius:2.5px;border:1px solid #fff;background:#333"></div>
<div class="abs" style="left:405px;top:99px;width:5px;height:5px;border-radius:2.5px;border:1px solid #fff;background:#333"></div>
<div class="abs" style="left:86.3px;top:28.5px;width:1px;height:116px;background:#d9652a"></div>
<svg class="abs" style="left:83.8px;top:25.30000000000001px" width="6" height="8" viewBox="0 0 6 8"><path d="M.4.4h5.2v3.6L3 7.6.4 4z" fill="#e8742c"/><path d="M3 2v3" stroke="#a84c14" stroke-width=".8"/></svg>
<div class="abs" style="left:18px;top:146px;width:541px;height:2.5px;border-radius:1.25px;background:#6c6c6c"></div>
<div class="abs" style="left:609.6px;top:45.5px;width:2.5px;height:97.5px;border-radius:1.25px;background:#8c8c8c"></div>
<div class="abs" style="left:614px;top:23px;width:31px;height:140px;background:#1b1b1b"></div>
<div class="abs" style="left:629.5px;top:43px;width:4px;height:94px;background:repeating-linear-gradient(180deg,#2c2c2c 0 1px,#1f1f1f 1px 2px)"></div>
<div class="abs" style="left:637px;top:43px;width:4px;height:94px;background:repeating-linear-gradient(180deg,#2c2c2c 0 1px,#1f1f1f 1px 2px)"></div>
<div class="t" style="left:619px;top:44.5px;width:7px;text-align:right;font-size:4.2px;color:#6c6c6c">0</div>
<div class="t" style="left:619px;top:55.7px;width:7px;text-align:right;font-size:4.2px;color:#6c6c6c">-5</div>
<div class="t" style="left:619px;top:66.9px;width:7px;text-align:right;font-size:4.2px;color:#6c6c6c">-10</div>
<div class="t" style="left:619px;top:78.1px;width:7px;text-align:right;font-size:4.2px;color:#6c6c6c">-15</div>
<div class="t" style="left:619px;top:89.3px;width:7px;text-align:right;font-size:4.2px;color:#6c6c6c">-20</div>
<div class="t" style="left:619px;top:100.5px;width:7px;text-align:right;font-size:4.2px;color:#6c6c6c">-30</div>
<div class="t" style="left:619px;top:111.7px;width:7px;text-align:right;font-size:4.2px;color:#6c6c6c">-40</div>
<div class="t" style="left:619px;top:122.9px;width:7px;text-align:right;font-size:4.2px;color:#6c6c6c">-50</div>
<div class="t" style="left:619px;top:134.1px;width:7px;text-align:right;font-size:4.2px;color:#6c6c6c">-60</div>
<div class="t" style="left:630.5px;top:141.5px;font-size:3.6px;color:#555">L</div>
<div class="t" style="left:638px;top:141.5px;font-size:3.6px;color:#555">R</div>
<div class="abs" style="left:0;top:150.5px;width:645px;height:14px;background:#1b1b1b"></div>
<div class="t" style="left:4px;top:153.5px;font-size:6.33px;color:#c4c4c4">Project length: 01:17</div>
<svg class="ic" style="left:631.5px;top:152px;width:7px;height:7px" viewBox="0 0 10 10" fill="none" stroke="#3a3a3a" stroke-width="0.9" stroke-linecap="round" stroke-linejoin="round" ><rect x="1" y="1" width="8" height="8" rx="1"/><path d="M5 1v8M1 5h8"/></svg>
</div>
<div class="abs" style="left:250px;top:0;width:24px;height:174.5px;background:linear-gradient(90deg,rgba(0,0,0,0),rgba(0,0,0,.55) 40%,rgba(0,0,0,.85))"></div>
<div class="abs" style="left:602px;top:0;width:43px;height:174.5px;background:rgba(0,0,0,.8)"></div>
</div>
<div id="preview">
<svg class="abs" style="left:0;top:0" width="328" height="155.5" viewBox="310 78 328 155.5" preserveAspectRatio="none">
<defs>
<filter id="bl" x="-5%" y="-5%" width="110%" height="110%"><feGaussianBlur stdDeviation="0.6"/></filter>
<filter id="b1" x="-30%" y="-30%" width="160%" height="160%"><feGaussianBlur stdDeviation="1.2"/></filter>
<filter id="b2" x="-40%" y="-40%" width="180%" height="180%"><feGaussianBlur stdDeviation="2.4"/></filter>
<linearGradient id="bandL" gradientUnits="userSpaceOnUse" x1="380" y1="168.6" x2="390" y2="190.5"><stop offset="0" stop-color="#22333a"/><stop offset=".25" stop-color="#1a282d"/><stop offset="1" stop-color="#141e22"/></linearGradient>
<linearGradient id="bandR" gradientUnits="userSpaceOnUse" x1="540" y1="95.4" x2="550" y2="117.3"><stop offset="0" stop-color="#2b5a68"/><stop offset=".2" stop-color="#1f4450"/><stop offset="1" stop-color="#183640"/></linearGradient>
<clipPath id="cL"><rect x="300" y="70" width="160.6" height="170"/></clipPath>
<clipPath id="cR"><rect x="459.8" y="70" width="190" height="170"/></clipPath>
<clipPath id="faceclip"><path id="facep" d="M443 100C441.5 106 442 114 443.5 119C445 124 448.5 128 452.3 130.6C455 133.5 458.5 135.6 463 136.2C468 136.6 473 134 477.2 129C480 125 481.5 121 482 116C483 110 482.5 104 481 98C476 84 450 84 443 100z"/></clipPath>
</defs>
<g filter="url(#bl)">
<!-- ===== left (before) half ===== -->
<g>
<rect x="300" y="70" width="170" height="170" fill="#3f5966"/>
<path d="M300 205.3L600 68.2V240H300z" fill="#0d1416"/>
<path d="M300 205.3L600 68.2V92.7L300 229.8z" fill="url(#bandL)"/>
<path d="M346.6 207.5H395V186H431V240H346.6z" fill="#a2806a"/>
<path d="M346.6 207.5H360V240H346.6z" fill="#927460"/>
<path d="M395 186H409.5V240H395z" fill="#aa8870"/>
<path d="M346.6 228h90v12h-90z" fill="#8a6c58" opacity=".5" filter="url(#b1)"/>
<!-- black jacket -->
<path d="M441 166L450 160L462 166V240H390L404 227L422 215L431 197z" fill="#0e1114"/>
<!-- beige hood -->
<path d="M450.6 143.4L454.3 140L462 144V207L449.4 218.5L444.5 208L448.2 174L449.4 154.4z" fill="#a8917f"/>
<path d="M450 150L453 147L455 200L449 214L446 207L449 174z" fill="#8c7868" filter="url(#b1)"/>
<!-- pale trousers (before) -->
<path d="M449.4 218.5L462 206V240H440z" fill="#b9b1a8"/>
<!-- neck -->
<path d="M452 128H462V150L455.5 146.5z" fill="#54443c"/>
<!-- face -->
<use href="#facep" fill="#7a6a61"/>
<g clip-path="url(#faceclip)">
<ellipse cx="453.8" cy="104" rx="5.5" ry="2.6" fill="#453935" filter="url(#b1)"/>
<ellipse cx="448" cy="123" rx="5" ry="9" fill="#54453e" filter="url(#b2)"/>
<ellipse cx="455" cy="97.5" rx="6" ry="2.5" fill="#75675f" filter="url(#b1)"/>
<ellipse cx="459" cy="110" rx="2" ry="3.5" fill="#8c7c72" filter="url(#b1)"/>
<ellipse cx="457.5" cy="118.3" rx="4" ry="1.4" fill="#574540" filter="url(#b1)"/>
<ellipse cx="458" cy="128.5" rx="4.5" ry="3.5" fill="#85736a" filter="url(#b1)"/>
</g>
</g>
<!-- ===== right (after) half ===== -->
<g clip-path="url(#cR)">
<rect x="455" y="70" width="195" height="170" fill="#32b0d8"/>
<path d="M300 205.3L600 68.2H650V240H300z" fill="#091214"/>
<path d="M300 205.3L600 68.2H650V70L300 229.8z" fill="url(#bandR)"/>
<!-- yellow walls -->
<path d="M527 149L556.2 154V240H527z" fill="#eea20e"/>
<path d="M556.2 115.6L650 143V240H556.2z" fill="#f2aa0c"/>
<path d="M556.2 115.6L570.8 120V240H556.2z" fill="#f9ba18"/>
<path d="M570.8 120h1v120h-1z" fill="#d89208"/>
<!-- neck -->
<path d="M459 128H476.5L478 148L459 154z" fill="#b06a38"/>
<path d="M464 137L477 130L476 146L466 150z" fill="#6a3418" filter="url(#b1)"/>
<!-- face -->
<use href="#facep" fill="#cc8658"/>
<g clip-path="url(#faceclip)">
<ellipse cx="469" cy="97" rx="8" ry="3.5" fill="#b87848" filter="url(#b1)"/>
<ellipse cx="470.5" cy="103.6" rx="6" ry="2.2" fill="#6a3a20" filter="url(#b1)"/>
<ellipse cx="475" cy="109" rx="4.5" ry="3.5" fill="#f0b080" filter="url(#b1)"/>
<ellipse cx="463" cy="109.5" rx="2.4" ry="4" fill="#dc9864" filter="url(#b1)"/>
<ellipse cx="464.5" cy="113.8" rx="3" ry="1" fill="#8a4a2c" filter="url(#b1)"/>
<ellipse cx="465" cy="118.2" rx="5" ry="1.6" fill="#a44e36" filter="url(#b1)"/>
<ellipse cx="467" cy="128" rx="6" ry="4" fill="#dd9866" filter="url(#b1)"/>
<ellipse cx="480" cy="122" rx="2.6" ry="8" fill="#a8643c" filter="url(#b1)"/>
</g>
<!-- yellow hoodie -->
<path d="M459 141L468 136L481 124L492 118.5L503 119L507.6 127L501 134L494 141L493.5 186.3L481.3 201L459 209z" fill="#f2a614"/>
<path d="M466 152L476 140L489 128L499 124L492 134L482 146L474 160L468 172z" fill="#c27a0a" filter="url(#bl)"/>
<path d="M477 158l3 0 2 38-4 4z" fill="#d68e0c" filter="url(#bl)"/>
<path d="M486 150l6-6 1 40-5 8z" fill="#dc940e" filter="url(#b1)"/>
<!-- white jacket -->
<path d="M493.5 141L503.3 132.4L512 131.5L519 135L527.8 149.5L537.6 174L547.5 208.3L557 240H459V208.5L481.3 201L493.5 186.3z" fill="#e4ddd5"/>
<path d="M494.5 143L500 138L503 164L509 190L498 204L478 213L462 214L482 201L494 186z" fill="#b5aca2" filter="url(#b1)"/>
<path d="M462 216L500 207L528 205L548 222L552 240H462z" fill="#cdc5bb" filter="url(#b1)"/>
<path d="M510 150L522 170L530 196" stroke="#c2b9af" stroke-width="2" fill="none" filter="url(#b1)"/>
<path d="M519 216.5l12 5.5-1.5 3-12-5.5z" fill="#b8844e"/>
</g>
<!-- ears -->
<ellipse cx="442.6" cy="114" rx="1.9" ry="6" fill="#6a5950"/>
<ellipse cx="483" cy="111.5" rx="1.7" ry="6" fill="#b06c44"/>
<!-- hair spans both halves -->
<path d="M439.8 105C438.5 96 440 84 446 80C452 77.3 466 76.8 474 78.8C480 82 481.5 90 481 100L479.8 104C478.5 98.5 476 94 472 92.5C466 90.8 458 91 452 93C447 95.5 445 100 443.6 107.5z" fill="#16110e"/>
</g>
</svg>

<div class="abs" style="left:0;top:155px;width:328px;height:45px;background:#161616"></div>
<div class="abs" style="left:0;top:155px;width:328px;height:10px;background:#1e1e1e"></div>
<div class="abs" style="left:0;top:165px;width:328px;height:5.5px;background:#353535"></div>
<div class="abs" style="left:0;top:165px;width:91px;height:5.5px;background:#d2d2d2;border-radius:0 1px 1px 0"></div>
<div class="t" style="left:10px;top:180.8px;font-family:'Liberation Mono',monospace;font-size:7.95px;color:#5e5e5e"><b style="color:#e4e4e4">00:20</b><span style="color:#787878">.345</span> / 00:20.345</div>
<svg class="ic" style="left:134px;top:179px;width:10px;height:10px" viewBox="0 0 10 10" fill="none" stroke="#e6e6e6" stroke-width="1.3" stroke-linecap="round" stroke-linejoin="round" ><path d="M4 1.4L1.6 3.6 4 5.8M1.8 3.6h3.6c1.8 0 2.8 1 2.8 2.6"/><path d="M5.2 6.6v2.2"/></svg>
<svg class="ic" style="left:158.5px;top:179px;width:10px;height:10px" viewBox="0 0 10 10" fill="none" stroke="#e6e6e6" stroke-width="0.8" stroke-linecap="round" stroke-linejoin="round" ><path d="M2.2 1.4l6 3.6-6 3.6z" fill="#e6e6e6"/></svg>
<svg class="ic" style="left:184px;top:179px;width:10px;height:10px" viewBox="0 0 10 10" fill="none" stroke="#e6e6e6" stroke-width="1.3" stroke-linecap="round" stroke-linejoin="round" ><path d="M6 1.4l2.4 2.2L6 5.8M8.2 3.6H4.6c-1.8 0-2.8 1-2.8 2.6"/><path d="M4.8 6.6v2.2"/></svg>
<div class="t" style="left:224.5px;top:181.5px;font-size:5.2px;color:#bcbcbc;font-weight:bold">16:9</div>
<svg class="ic" style="left:240.5px;top:180px;width:8px;height:8px" viewBox="0 0 10 10" fill="none" stroke="#bcbcbc" stroke-width="1.2" stroke-linecap="round" stroke-linejoin="round" ><path d="M2.6 3.8L5 6.2l2.4-2.4"/></svg>
<svg class="ic" style="left:263px;top:179px;width:10px;height:10px" viewBox="0 0 10 10" fill="none" stroke="#e6e6e6" stroke-width="1.2" stroke-linecap="round" stroke-linejoin="round" ><path d="M1.3 3.6h1.7l2.5-2v6.8l-2.5-2H1.3z"/><path d="M7.5 2.4c1.3 1.5 1.3 3.7 0 5.2" stroke-width="1.3"/></svg>
<svg class="ic" style="left:285px;top:179px;width:10px;height:10px" viewBox="0 0 10 10" fill="none" stroke="#e6e6e6" stroke-width="1.3" stroke-linecap="round" stroke-linejoin="round" ><path d="M1.4 3.6V1.4h2.2M6.4 1.4h2.2v2.2M8.6 6.4v2.2H6.4M3.6 8.6H1.4V6.4"/></svg>
<svg class="ic" style="left:306.5px;top:179px;width:10px;height:10px" viewBox="0 0 10 10" fill="none" stroke="#e6e6e6" stroke-width="1.2" stroke-linecap="round" stroke-linejoin="round" ><path d="M5 .8l3.6 2.1v4.2L5 9.2 1.4 7.1V2.9z"/><circle cx="5" cy="5" r="1.5"/></svg>
</div>
<div id="panel">
<div class="trk" style="top:12.5px"><i style="width:54.3px"></i><b style="left:54.3px"></b></div>
<div class="trk" style="top:32.4px"><i style="width:63.3px"></i><b style="left:63.3px"></b></div>
<div class="trk" style="top:52.2px"><i style="width:57px"></i><b style="left:57px"></b></div>
<div class="trk" style="top:72px"><i style="width:71.2px"></i><b style="left:71.2px"></b></div>
<div class="trk" style="top:91.8px"><i style="width:63px"></i><b style="left:63px"></b></div>
<div class="trk" style="top:111.5px"><i style="width:63px"></i><b style="left:63px"></b></div>
<div class="trk" style="top:131.3px;background:linear-gradient(90deg,#f02020 0%,#f08020 12%,#f0e020 24%,#40e040 38%,#30d8b0 50%,#20a0f0 60%,#3040f0 72%,#c030e0 84%,#f03090 94%,#f03030 100%)"><b style="left:58.8px;background:#5fd6ac;border:1px solid #c8f4e4"></b></div>
<div class="trk" style="top:151px;background:linear-gradient(90deg,#1030ff 0%,#3038f8 25%,#a030e0 50%,#e06080 68%,#f0a020 100%)"><b style="left:58.8px;background:#a432e2;border:1px solid #dcb4f4"></b></div>
<div class="trk" style="top:170.8px;background:linear-gradient(90deg,#f040c8 0%,#d850b8 25%,#a08888 50%,#60c860 75%,#48ec50 100%)"><b style="left:58.8px;background:#a48888;border:1px solid #e0d0d0"></b></div>
</div>
</body></html>
